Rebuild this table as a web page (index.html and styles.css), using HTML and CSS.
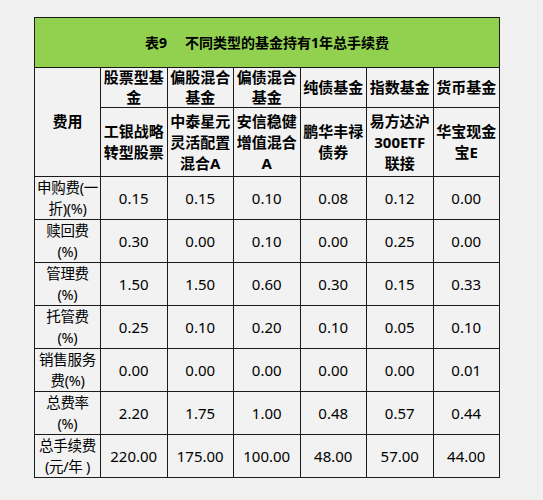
FILE: index.html
```html
<!DOCTYPE html>
<html lang="zh">
<head>
    <meta charset="utf-8">
    <meta name="viewport" content="width=device-width, initial-scale=1">
    <link rel="stylesheet" href="styles.css">
    <title>基金手续费</title>
</head>
<body>
    <table class="fees">
        <colgroup>
            <col class="c-label">
            <col><col><col><col><col><col>
        </colgroup>
        <tr class="title">
            <th colspan="7">表9&nbsp;&nbsp;&nbsp;&nbsp;&nbsp;不同类型的基金持有1年总手续费</th>
        </tr>
        <tr class="types">
            <th rowspan="2">费用</th>
            <th>股票型基<br>金</th>
            <th>偏股混合<br>基金</th>
            <th>偏债混合<br>基金</th>
            <th>纯债基金</th>
            <th>指数基金</th>
            <th>货币基金</th>
        </tr>
        <tr class="names">
            <th>工银战略<br>转型股票</th>
            <th>中泰星元<br>灵活配置<br>混合A</th>
            <th>安信稳健<br>增值混合<br>A</th>
            <th>鹏华丰禄<br>债券</th>
            <th>易方达沪<br>300ETF<br>联接</th>
            <th>华宝现金<br>宝E</th>
        </tr>
        <tr>
            <td class="label">申购费(一<br>折)(%)</td>
            <td>0.15</td><td>0.15</td><td>0.10</td><td>0.08</td><td>0.12</td><td>0.00</td>
        </tr>
        <tr>
            <td class="label">赎回费<br>(%)</td>
            <td>0.30</td><td>0.00</td><td>0.10</td><td>0.00</td><td>0.25</td><td>0.00</td>
        </tr>
        <tr>
            <td class="label">管理费<br>(%)</td>
            <td>1.50</td><td>1.50</td><td>0.60</td><td>0.30</td><td>0.15</td><td>0.33</td>
        </tr>
        <tr>
            <td class="label">托管费<br>(%)</td>
            <td>0.25</td><td>0.10</td><td>0.20</td><td>0.10</td><td>0.05</td><td>0.10</td>
        </tr>
        <tr>
            <td class="label">销售服务<br>费(%)</td>
            <td>0.00</td><td>0.00</td><td>0.00</td><td>0.00</td><td>0.00</td><td>0.01</td>
        </tr>
        <tr>
            <td class="label">总费率<br>(%)</td>
            <td>2.20</td><td>1.75</td><td>1.00</td><td>0.48</td><td>0.57</td><td>0.44</td>
        </tr>
        <tr>
            <td class="label">总手续费<br>(元/年 )</td>
            <td>220.00</td><td>175.00</td><td>100.00</td><td>48.00</td><td>57.00</td><td>44.00</td>
        </tr>
    </table>
</body>
</html>
```

FILE: styles.css
```css
* { margin: 0; padding: 0; box-sizing: border-box; }
html, body { width: 100%; height: 100%; }
body { background: #f0f0f0; padding: 17px 0 0 34px; font-family: "Noto Sans", "Noto Sans CJK SC", sans-serif; color: #000; }
.fees { width: 465px; border-collapse: collapse; table-layout: fixed; background: #f2f2f2; }
.fees col { width: 66.5px; }
.fees col.c-label { width: 66px; }
.fees th, .fees td { border: 1px solid #1b1b1b; text-align: center; vertical-align: middle; padding: 0; }
.fees th { font-weight: bold; font-size: 15px; line-height: 20px; }
.fees td { font-size: 15px; line-height: 21px; height: 42px; }
.fees td.label { font-size: 14.5px; letter-spacing: -0.3px; }
.title th { background: #92d050; height: 50px; font-size: 14px; }
.types th { height: 39px; line-height: 19.5px; }
.names th { height: 69px; line-height: 21px; }
```
